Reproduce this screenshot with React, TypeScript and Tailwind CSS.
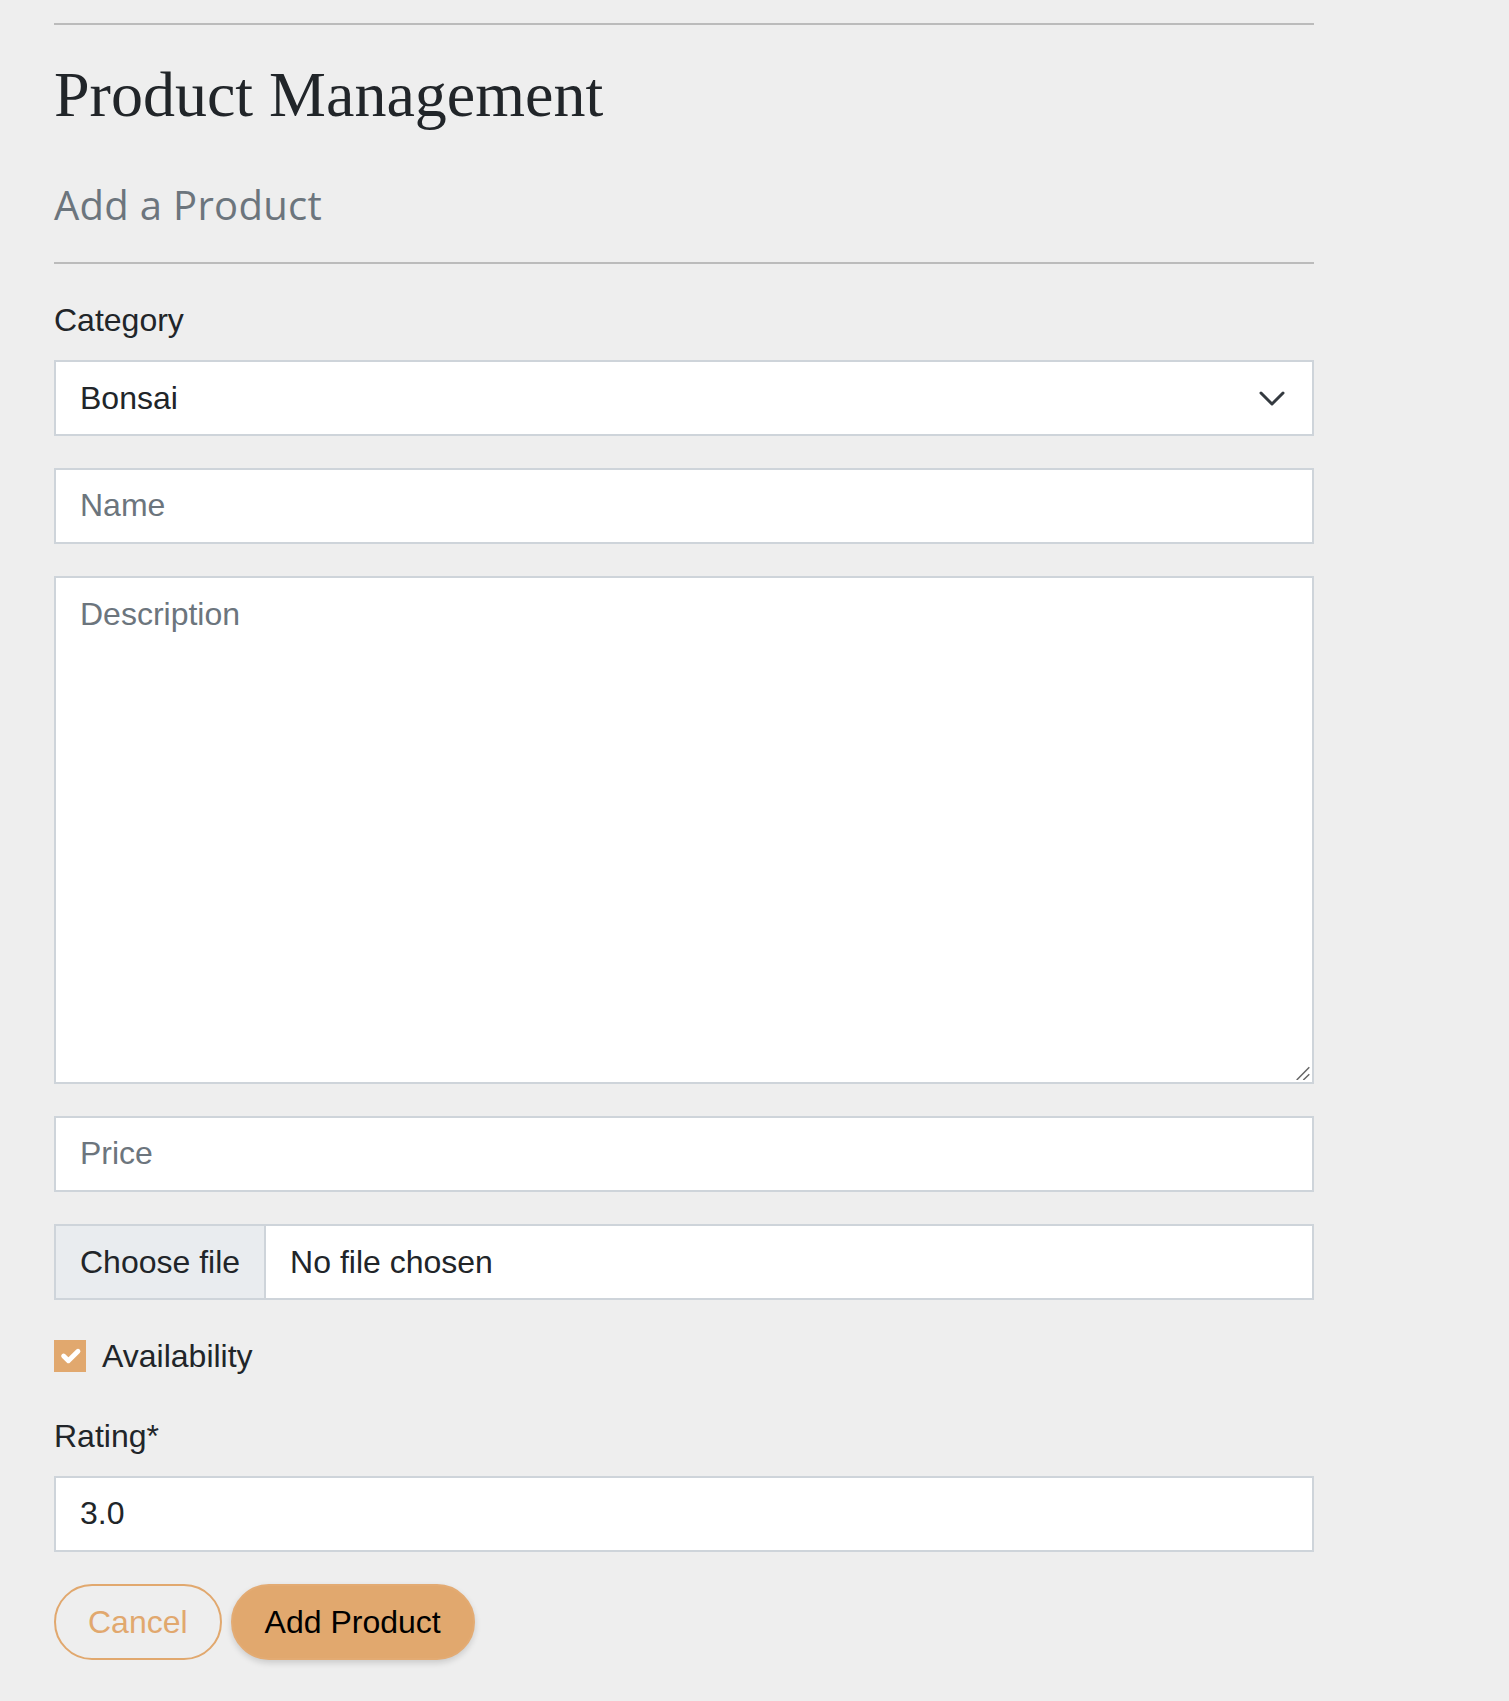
import { useState } from 'react';

const fieldClass =
  'block w-full h-[76px] border-2 border-[#ced4da] bg-white px-[24px] py-[12px] text-[32px] leading-[48px] text-[#212529] placeholder:text-[#6c757d] outline-none';

export default function App() {
  const [category, setCategory] = useState('Bonsai');
  const [available, setAvailable] = useState(true);
  const [rating, setRating] = useState('3.0');

  return (
    <div className="min-h-[1701px] bg-[#eeeeee] font-['Liberation_Sans',Arial,sans-serif] text-[#212529]">
      <div className="ml-[54px] w-[1260px] pt-[23px]">
        <div className="h-[2px] bg-[#bbbbbb]" />

        <h1 className="mt-[32px] font-['Liberation_Serif','Times_New_Roman',serif] text-[64px] leading-[1.2] font-normal text-[#212529]">
          Product Management
        </h1>
        <h3 className="mt-[47px] font-['Open_Sans',sans-serif] text-[40px] leading-[1.2] font-normal tracking-[0.3px] text-[#6c757d]">
          Add a Product
        </h3>

        <div className="mt-[33px] h-[2px] bg-[#bbbbbb]" />

        <form className="mt-[32px]" onSubmit={(e) => e.preventDefault()}>
          {/* Category */}
          <label className="block text-[32px] leading-[48px]">Category</label>
          <div className="relative mt-[16px]">
            <select
              value={category}
              onChange={(e) => setCategory(e.target.value)}
              className={`${fieldClass} appearance-none pr-[80px]`}
            >
              <option>Bonsai</option>
              <option>Succulent</option>
              <option>Cactus</option>
            </select>
            <svg
              className="pointer-events-none absolute right-[26px] top-1/2 -translate-y-1/2"
              width="32"
              height="24"
              viewBox="0 0 16 12"
              fill="none"
            >
              <path d="M2.5 3.5l5.5 5.5 5.5-5.5" stroke="#343a40" strokeWidth="1.5" strokeLinecap="round" strokeLinejoin="round" />
            </svg>
          </div>

          <input type="text" placeholder="Name" className={`${fieldClass} mt-[32px]`} />

          <div className="relative mt-[32px]">
            <textarea
              placeholder="Description"
              className="block h-[508px] w-full resize-none border-2 border-[#ced4da] bg-white px-[24px] py-[12px] text-[32px] leading-[48px] text-[#212529] outline-none placeholder:text-[#6c757d]"
            />
            {/* resize grip */}
            <svg className="pointer-events-none absolute right-[4px] bottom-[4px]" width="14" height="14" viewBox="0 0 14 14">
              <path d="M0.7 14L13.3 1.3M7.3 14L13.3 8.3" stroke="#666" strokeWidth="1.5" />
            </svg>
          </div>

          <input type="text" placeholder="Price" className={`${fieldClass} mt-[32px]`} />

          {/* File picker */}
          <div className="mt-[32px] flex h-[76px] border-2 border-[#ced4da] bg-white text-[32px] leading-[48px]">
            <div className="flex items-center border-r-2 border-[#ced4da] bg-[#e9ecef] px-[24px]">Choose file</div>
            <div className="flex items-center px-[24px]">No file chosen</div>
          </div>

          {/* Availability */}
          <div className="mt-[32px] flex items-start text-[32px] leading-[48px]">
            <button
              type="button"
              onClick={() => setAvailable(!available)}
              className={`mt-[8px] flex h-[32px] w-[32px] shrink-0 items-center justify-center ${
                available ? 'bg-[#e1a86e]' : 'border-2 border-[#ced4da] bg-white'
              }`}
            >
              {available && (
                <svg width="32" height="32" viewBox="0 0 20 20" fill="none">
                  <path d="M6 10l3 3 6-6" stroke="#fff" strokeWidth="3" strokeLinecap="round" strokeLinejoin="round" />
                </svg>
              )}
            </button>
            <span className="ml-[16px]">Availability</span>
          </div>

          {/* Rating */}
          <label className="mt-[32px] block text-[32px] leading-[48px]">Rating*</label>
          <input
            type="text"
            value={rating}
            onChange={(e) => setRating(e.target.value)}
            className={`${fieldClass} mt-[16px]`}
          />

          <div className="mt-[32px] flex gap-[9px]">
            <button
              type="button"
              className="h-[76px] rounded-full border-2 border-[#e1a86e] bg-transparent px-[32px] text-[32px] leading-[48px] text-[#e1a86e]"
            >
              Cancel
            </button>
            <button
              type="submit"
              className="h-[76px] rounded-full border-2 border-[#e3ab73] bg-[#e1a86e] px-[32px] text-[32px] leading-[48px] text-black shadow-[0_3px_6px_rgba(0,0,0,0.15)]"
            >
              Add Product
            </button>
          </div>
        </form>
      </div>
    </div>
  );
}
